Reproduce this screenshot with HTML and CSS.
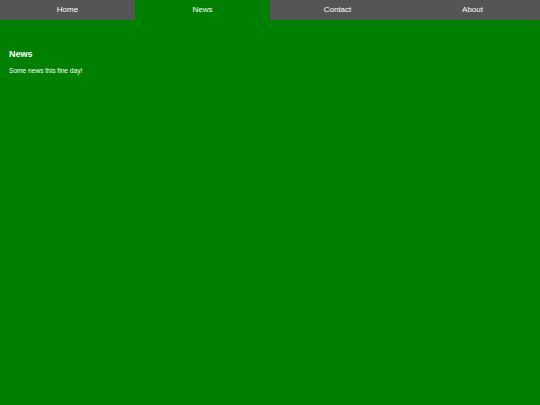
FILE: index.html
```html
<!DOCTYPE html>
<html lang="en">
<head>
    <meta charset="UTF-8">
    <meta name="viewport" content="width=device-width, initial-scale=1.0">
    <title>Tabs</title>
    <link rel="stylesheet" href="styles.css">
</head>
<body>
    <div class="tabs">
        <button class="tablink">Home</button>
        <button class="tablink active">News</button>
        <button class="tablink">Contact</button>
        <button class="tablink">About</button>
    </div>

    <div class="tabcontent">
        <h3>News</h3>
        <p>Some news this fine day!</p>
    </div>
</body>
</html>
```

FILE: styles.css
```css
html, body {
    height: 100%;
}
body {
    font-family: "Liberation Sans", Arial, sans-serif;
    margin: 0;
    background: #008000;
    color: white;
}
.tabs {
    display: flex;
}
.tablink {
    flex: 1;
    height: 20px;
    background: #555;
    color: white;
    border: none;
    padding: 0 0 1px 0;
    font-family: inherit;
    font-size: 8px;
    cursor: pointer;
}
.tablink.active {
    background: #008000;
}
.tabcontent {
    padding: 29px 9px;
}
.tabcontent h3 {
    font-size: 9px;
    margin: 0 0 8px 0;
}
.tabcontent p {
    font-size: 6.6px;
    margin: 0;
}
```
